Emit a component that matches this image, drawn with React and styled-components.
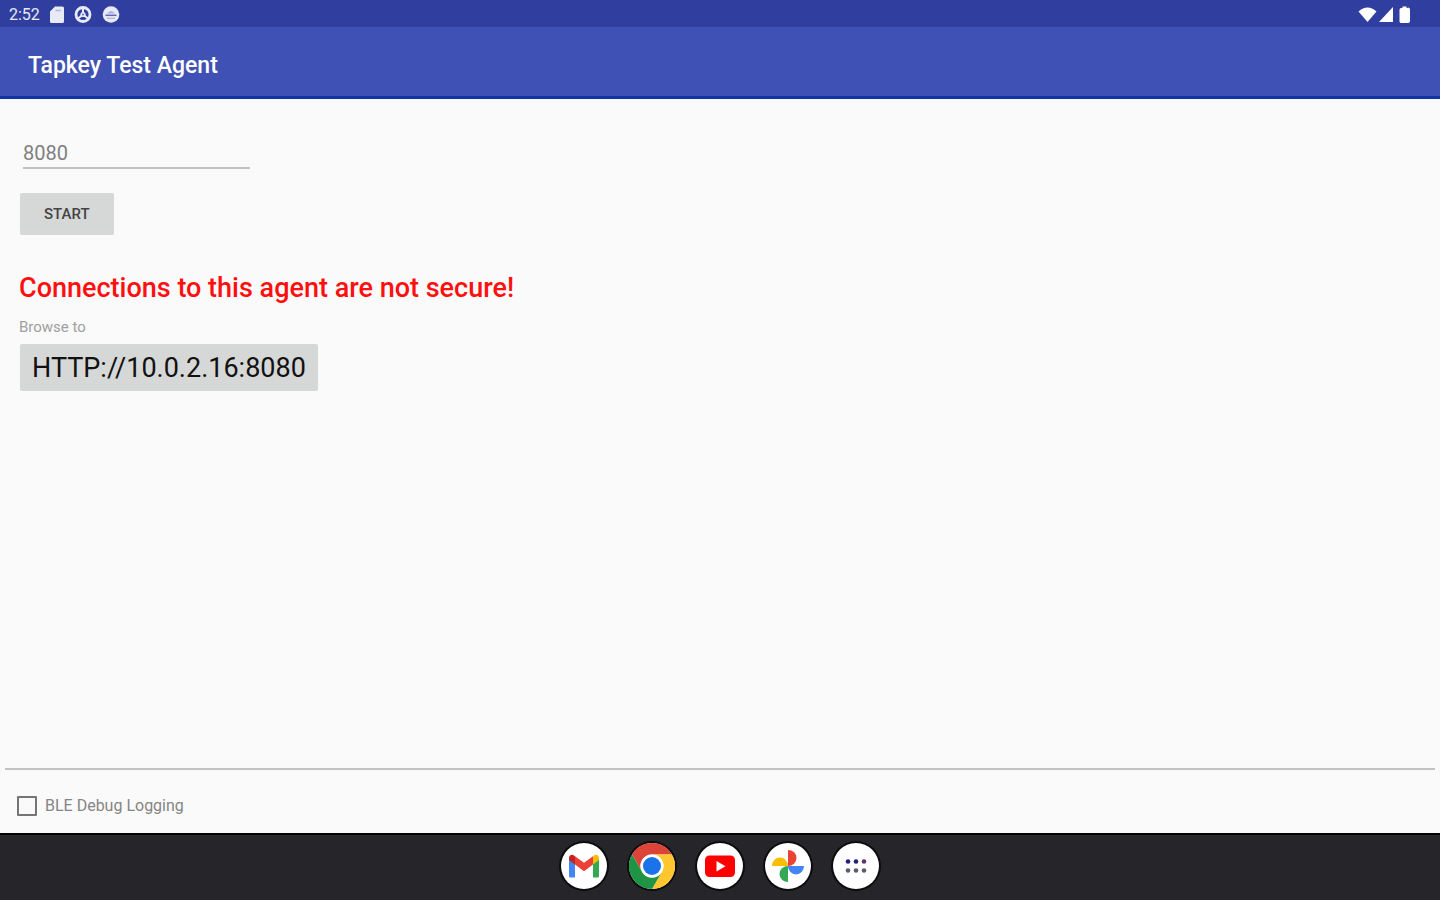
import React, { useState } from "react";
import styled, { createGlobalStyle } from "styled-components";

const GlobalStyle = createGlobalStyle`
  * {
    box-sizing: border-box;
  }
  body {
    margin: 0;
    background-color: #fafafa;
    font-family: Roboto, "Liberation Sans", sans-serif;
  }
`;

const Screen = styled.div`
  display: flex;
  flex-direction: column;
  min-height: 100vh;
`;

const StatusBar = styled.div`
  display: flex;
  align-items: center;
  justify-content: space-between;
  height: 27px;
  padding: 2px 29px 0 9px;
  background-color: #303f9f;
  color: #e8eaf6;
`;

const StatusGroup = styled.div`
  display: flex;
  align-items: center;
  gap: ${(props) => props.$gap};
`;

const Time = styled.span`
  font-size: 16px;
  line-height: 20px;
`;

const AppBar = styled.header`
  display: flex;
  align-items: center;
  height: 72px;
  padding: 8px 28px 0;
  border-bottom: 3px solid #1233a5;
  background-color: #3f51b5;
`;

const Title = styled.h1`
  margin: 0;
  color: #fff;
  font-size: 23px;
  font-weight: 500;
  line-height: 28px;
`;

const Main = styled.main`
  display: flex;
  flex: 1;
  flex-direction: column;
  align-items: flex-start;
  padding: 40px 20px 24px;
`;

const PortInput = styled.input`
  width: 227px;
  height: 30px;
  margin: 0 0 24px 3px;
  padding: 0;
  border: none;
  border-bottom: 2px solid #c0c0c0;
  border-radius: 0;
  outline: none;
  background: transparent;
  color: #808080;
  font-family: inherit;
  font-size: 20px;
`;

const Button = styled.button`
  height: ${(props) => (props.$large ? "47px" : "42px")};
  padding: ${(props) => (props.$large ? "0 12px" : "0 24px")};
  border: none;
  border-radius: 2px;
  background-color: #d6d7d7;
  color: ${(props) => (props.$large ? "#111" : "#444")};
  font-family: inherit;
  font-size: ${(props) => (props.$large ? "27px" : "15px")};
  font-weight: ${(props) => (props.$large ? 400 : 500)};
  text-transform: uppercase;
`;

const Warning = styled.p`
  margin: 37px 0 13px -1px;
  color: #ff0f0f;
  font-size: 27px;
  font-weight: 500;
  line-height: 32px;
`;

const Caption = styled.span`
  margin: 0 0 7px -1px;
  color: #a0a0a0;
  font-size: 15px;
  line-height: 20px;
`;

const Footer = styled.footer`
  margin: 0 5px;
  padding: 26px 12px 17px;
  border-top: 2px solid #c2c2c2;
`;

const CheckLabel = styled.label`
  display: flex;
  align-items: center;
  gap: 8px;
  width: fit-content;
  color: #858585;
  font-size: 16px;
  line-height: 20px;
`;

const Checkbox = styled.input`
  appearance: none;
  width: 20px;
  height: 20px;
  margin: 0;
  border: 2px solid #757575;
  border-radius: 1px;
  &:checked {
    background-color: #3f51b5;
  }
`;

const Dock = styled.nav`
  display: flex;
  align-items: center;
  justify-content: center;
  gap: 22px;
  height: 67px;
  padding-bottom: 3px;
  border-top: 2px solid #000;
  background-color: #262529;
`;

const DockButton = styled.button`
  width: 46px;
  height: 46px;
  padding: 0;
  border: none;
  border-radius: 50%;
  background-color: #fff;
  box-shadow: 0 0 0 2px #0c0c0f;
  svg {
    display: block;
  }
`;

const SdCardIcon = () => (
  <svg width="14" height="18" viewBox="0 0 14 18" fill="currentColor">
    <path d="M5 0.500h7.500a1.500 1.500 0 0 1 1.500 1.500v13.500a1.500 1.500 0 0 1-1.500 1.500h-11A1.500 1.500 0 0 1 0 15.500V5.500z" />
    <path d="M5.500 4.500h5.500" stroke="#b4badf" strokeWidth="1.500" />
  </svg>
);

const WheelIcon = () => (
  <svg width="18" height="18" viewBox="0 0 18 18">
    <circle cx="9" cy="8.500" r="7" fill="none" stroke="currentColor" strokeWidth="2.800" />
    <path d="M9 8.500V2.500M9 8.500l-5 4M9 8.500l5 4" stroke="currentColor" strokeWidth="2" />
    <circle cx="9" cy="8.500" r="2.600" fill="currentColor" />
    <circle cx="9" cy="8.500" r="1" fill="#5c69b8" />
  </svg>
);

const AgentIcon = () => (
  <svg width="18" height="18" viewBox="0 0 18 18">
    <circle cx="9" cy="8.500" r="8.300" fill="currentColor" />
    <path d="M5 7.500Q9 2.500 13 7.500z" fill="#aab1da" />
    <path d="M3.500 9.300h11" stroke="#5c69b8" strokeWidth="1.500" />
    <path d="M5 12.300h8" stroke="#aab1da" strokeWidth="1.200" />
  </svg>
);

const WifiIcon = () => (
  <svg width="19" height="16" viewBox="0 0 19 16" fill="#fff">
    <path d="M0.500 4.500Q9.500-3.500 18.500 4.500L9.500 15z" />
  </svg>
);

const SignalIcon = () => (
  <svg width="15" height="16" viewBox="0 0 15 16" fill="#fff">
    <path d="M14 0v15H0z" />
  </svg>
);

const BatteryIcon = () => (
  <svg width="15" height="18" viewBox="0 0 15 18" fill="#fff">
    <path d="M6.500 0.500h4v1.500h0.800A1.700 1.700 0 0 1 14 3.700v11.600a1.700 1.700 0 0 1-1.700 1.700h-7.600A1.700 1.700 0 0 1 3.500 15.300V3.700a1.700 1.700 0 0 1 1.700-1.700h1.300z" />
  </svg>
);

const GmailIcon = () => (
  <svg width="46" height="46" viewBox="0 0 46 46">
    <path d="M8 16v17a1.500 1.500 0 0 0 1.500 1.500H14V19z" fill="#4285f4" />
    <path d="M32 19v15.500h4.500a1.500 1.500 0 0 0 1.500-1.500V16z" fill="#34a853" />
    <path d="M32 13.500V21.500l6-4.500v-1.500c0-3.500-3-4.500-5-3z" fill="#fbbc04" />
    <path d="M14 13.500V21.500L8 17v-1.500c0-3.500 3-4.500 5-3z" fill="#c5221f" />
    <path d="M14 21.500v-8.300l9 6.600 9-6.600v8.300L23 28.300z" fill="#ea4335" />
  </svg>
);

const ChromeIcon = () => (
  <svg width="46" height="46" viewBox="0 0 46 46">
    <path d="M3.080 11.500A23 23 0 0 1 42.920 11.500H23A11.500 11.500 0 0 0 13.040 28.750z" fill="#db4437" />
    <path d="M42.920 11.500A23 23 0 0 1 23 46L32.960 28.750A11.500 11.500 0 0 0 23 11.500z" fill="#ffc72e" />
    <path d="M23 46A23 23 0 0 1 3.080 11.500L13.040 28.750A11.500 11.500 0 0 0 32.960 28.750z" fill="#1e9444" />
    <circle cx="23" cy="23" r="11.500" fill="#fff" />
    <circle cx="23" cy="23" r="9" fill="#1a73e8" />
  </svg>
);

const YoutubeIcon = () => (
  <svg width="46" height="46" viewBox="0 0 46 46">
    <rect x="8" y="12.500" width="30" height="21.500" rx="4.500" fill="#f00" />
    <path d="M19.500 18v10.500l9-5.250z" fill="#fff" />
  </svg>
);

const PhotosIcon = () => (
  <svg width="46" height="46" viewBox="0 0 46 46">
    <path d="M23 23V7a8.500 8 0 0 1 0 16z" fill="#ea4335" />
    <path d="M23 23h16a8 8.500 0 0 1-16 0z" fill="#4285f4" />
    <path d="M23 23v16a8.500 8 0 0 1 0-16z" fill="#34a853" />
    <path d="M23 23H7a8 8.500 0 0 1 16 0z" fill="#fbbc04" />
  </svg>
);

const AppsIcon = () => (
  <svg width="46" height="46" viewBox="0 0 46 46">
    <g fill="#20207c">
      <circle cx="15" cy="18.500" r="2.300" />
      <circle cx="23" cy="18.500" r="2.300" />
      <circle cx="31" cy="18.500" r="2.300" fill="#5c3566" />
    </g>
    <g fill="#5c5c70">
      <circle cx="15" cy="27.500" r="2.300" />
      <circle cx="23" cy="27.500" r="2.300" />
      <circle cx="31" cy="27.500" r="2.300" />
    </g>
  </svg>
);

const apps = [
  { name: "Gmail", Icon: GmailIcon },
  { name: "Chrome", Icon: ChromeIcon },
  { name: "YouTube", Icon: YoutubeIcon },
  { name: "Photos", Icon: PhotosIcon },
  { name: "All apps", Icon: AppsIcon },
];

export default () => {
  const [port, setPort] = useState("8080");
  const [debug, setDebug] = useState(false);

  return (
    <>
      <GlobalStyle />
      <Screen>
        <StatusBar>
          <StatusGroup $gap="10px">
            <Time>2:52</Time>
            <SdCardIcon />
            <WheelIcon />
            <AgentIcon />
          </StatusGroup>
          <StatusGroup $gap="2px">
            <WifiIcon />
            <SignalIcon />
            <BatteryIcon />
          </StatusGroup>
        </StatusBar>
        <AppBar>
          <Title>Tapkey Test Agent</Title>
        </AppBar>
        <Main>
          <PortInput
            aria-label="Port"
            value={port}
            onChange={(e) => setPort(e.target.value)}
          />
          <Button type="button">Start</Button>
          <Warning>Connections to this agent are not secure!</Warning>
          <Caption>Browse to</Caption>
          <Button type="button" $large>
            http://10.0.2.16:8080
          </Button>
        </Main>
        <Footer>
          <CheckLabel>
            <Checkbox
              type="checkbox"
              checked={debug}
              onChange={(e) => setDebug(e.target.checked)}
            />
            BLE Debug Logging
          </CheckLabel>
        </Footer>
        <Dock>
          {apps.map(({ name, Icon }) => (
            <DockButton key={name} type="button" aria-label={name}>
              <Icon />
            </DockButton>
          ))}
        </Dock>
      </Screen>
    </>
  );
};
